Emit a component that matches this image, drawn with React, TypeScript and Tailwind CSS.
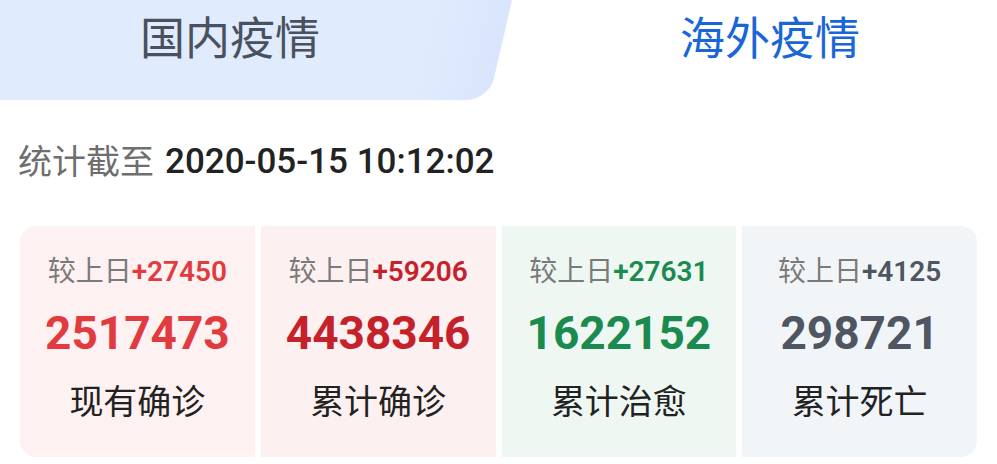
import React from "react";

const CJK = "font-['Roboto','Noto_Sans_CJK_SC',sans-serif]";

const stats = [
  {
    label: "现有确诊",
    delta: "+27450",
    value: "2517473",
    bg: "bg-[#fdf1f1]",
    color: "text-[#e23b3f]",
    round: "rounded-l-[16px]",
  },
  {
    label: "累计确诊",
    delta: "+59206",
    value: "4438346",
    bg: "bg-[#fdf0f0]",
    color: "text-[#c5212b]",
    round: "",
  },
  {
    label: "累计治愈",
    delta: "+27631",
    value: "1622152",
    bg: "bg-[#eef7f2]",
    color: "text-[#1b8a4f]",
    round: "",
  },
  {
    label: "累计死亡",
    delta: "+4125",
    value: "298721",
    bg: "bg-[#f2f5f8]",
    color: "text-[#4f5561]",
    round: "rounded-r-[16px]",
  },
];

function StatCard({ item }: { item: (typeof stats)[number] }) {
  return (
    <div
      className={`flex flex-col items-center pt-[30px] pb-[33px] ${item.bg} ${item.round}`}
    >
      <div className="h-[32px] text-[28px] leading-[32px] whitespace-nowrap">
        <span className="text-[#7a7a7a]">较上日</span>
        <span className={`font-semibold ${item.color}`}>{item.delta}</span>
      </div>
      <div
        className={`mt-[17px] h-[56px] text-[46px] leading-[56px] font-bold ${item.color}`}
      >
        {item.value}
      </div>
      <div className="mt-[19px] h-[44px] text-[34px] leading-[44px] text-[#222]">
        {item.label}
      </div>
    </div>
  );
}

export default function App() {
  return (
    <div className={`w-[997px] h-[464px] bg-white overflow-hidden ${CJK}`}>
      {/* Tabs */}
      <div className="flex h-[100px]">
        <div className="relative w-[498px] h-full">
          <div className="absolute left-0 top-0 h-full w-[512px] origin-top skew-x-[-13deg] rounded-br-[22px] bg-gradient-to-r from-[#e0ebfd] from-85% to-[#d8e5fc]" />
          <div className="relative flex h-full items-start justify-center pr-[38px] pt-[15px]">
            <span className="text-[45px] leading-[50px] text-[#4a515e]">
              国内疫情
            </span>
          </div>
        </div>
        <div className="flex flex-1 items-start justify-center pl-[45px] pt-[15px]">
          <span className="text-[45px] leading-[50px] text-[#1866d8]">
            海外疫情
          </span>
        </div>
      </div>

      {/* Update time */}
      <div className="mt-[40px] flex h-[44px] items-center pl-[18px] leading-[44px]">
        <span className="text-[34px] text-[#6e6e6e]">统计截至</span>
        <span className="ml-[11px] text-[35px] font-medium text-[#222]">
          2020-05-15 10:12:02
        </span>
      </div>

      {/* Stats */}
      <div className="mx-[20px] mt-[42px] grid grid-cols-4 gap-[6px]">
        {stats.map((item) => (
          <StatCard key={item.label} item={item} />
        ))}
      </div>
    </div>
  );
}
